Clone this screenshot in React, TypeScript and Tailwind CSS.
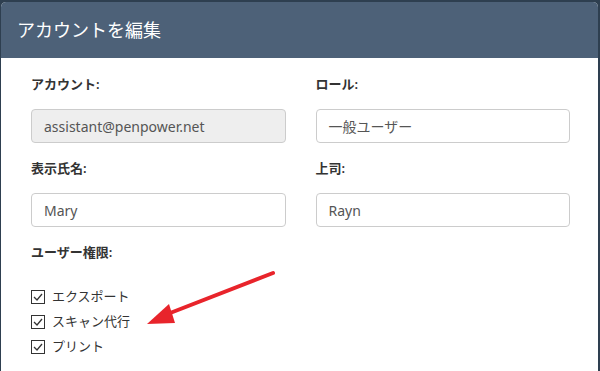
import React from 'react';

const font = { fontFamily: '"Noto Sans", "Noto Sans CJK JP", sans-serif' };

const Field: React.FC<{ label: string; value: string; readOnly?: boolean }> = ({ label, value, readOnly }) => (
    <div className="flex flex-col">
        <label className="h-[20px] text-[13px] leading-[20px] font-semibold text-[#333]">{label}</label>
        <div
            className={`mt-[15px] h-[34px] rounded-[4px] border border-[#ccc] px-[12px] flex items-center text-[14px] text-[#555] ${readOnly ? 'bg-[#eee]' : 'bg-white'}`}
        >
            {value}
        </div>
    </div>
);

const Check: React.FC<{ label: string }> = ({ label }) => (
    <div className="flex items-center h-[25px]">
        <svg width="14" height="14" viewBox="0 0 14 14" className="shrink-0">
            <rect x="0.5" y="0.5" width="13" height="13" fill="white" stroke="#333" />
            <path d="M3 7 L6 10 L11 4" fill="none" stroke="#333" strokeWidth="1.3" />
        </svg>
        <span className="ml-[7px] text-[13px] text-[#333]">{label}</span>
    </div>
);

export default function App() {
    return (
        <div className="w-[600px] h-[371px] bg-[#2e3f50] overflow-hidden relative" style={font}>
            <div className="ml-[1px] mt-[2px] w-[597px] h-[369px] bg-white rounded-t-[5px] overflow-hidden flex flex-col">
                <div className="h-[56px] bg-[#4d6178] flex items-center px-[16px]">
                    <h1 className="text-[18px] text-white font-normal">アカウントを編集</h1>
                </div>
                <div className="pl-[30px] pr-[28px] pt-[16px]">
                    <div className="grid grid-cols-2 gap-x-[30px] gap-y-[15px]">
                        <Field label="アカウント:" value="assistant@penpower.net" readOnly />
                        <Field label="ロール:" value="一般ユーザー" />
                        <Field label="表示氏名:" value="Mary" />
                        <Field label="上司:" value="Rayn" />
                    </div>
                    <div className="mt-[15px] h-[20px] text-[13px] leading-[20px] font-semibold text-[#333]">ユーザー権限:</div>
                    <div className="mt-[22px] flex flex-col">
                        <Check label="エクスポート" />
                        <Check label="スキャン代行" />
                        <Check label="プリント" />
                    </div>
                </div>
            </div>
            <svg className="absolute left-0 top-0 pointer-events-none" width="600" height="371">
                <line x1="273" y1="273" x2="165" y2="315" stroke="#e8242b" strokeWidth="4" strokeLinecap="round" />
                <polygon points="147,324 169,304 175,323" fill="#e8242b" />
            </svg>
        </div>
    );
}
